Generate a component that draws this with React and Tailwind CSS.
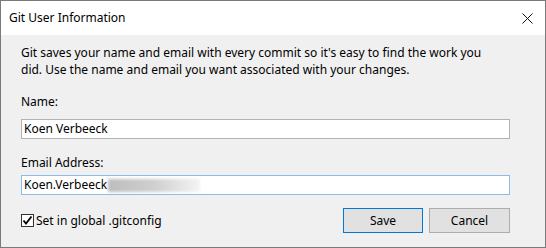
import React from "react";

export default function App() {
  return (
    <div className="w-[546px] h-[248px] flex flex-col border border-[#7a7a7a] bg-[#f0f0f0] text-[12px] text-black font-['Noto_Sans','Open_Sans',sans-serif] overflow-hidden">
      {/* title bar */}
      <div className="h-[34px] shrink-0 bg-white flex items-center justify-between pl-[8px] pr-[12px]">
        <span className="leading-[16px]">Git User Information</span>
        <svg width="11" height="11" viewBox="0 0 11 11" className="mt-[1px]">
          <path d="M0.5 0.5 L10.5 10.5 M10.5 0.5 L0.5 10.5" stroke="#111" strokeWidth="1" fill="none" />
        </svg>
      </div>

      {/* body */}
      <div className="flex-1 flex flex-col pl-[20px] pr-[35px] pt-[9px]">
        <p className="leading-[17px] whitespace-nowrap">
          Git saves your name and email with every commit so it's easy to find the work you
          <br />
          did. Use the name and email you want associated with your changes.
        </p>

        <label className="mt-[16px] leading-[16px]">Name:</label>
        <div className="mt-[9px] h-[20px] bg-white border border-[#b3b3b3] flex items-center px-[2px] leading-[16px]">
          Koen Verbeeck
        </div>

        <label className="mt-[16px] leading-[16px]">Email Address:</label>
        <div className="mt-[4px] h-[20px] bg-white border border-[#8fbbea] flex items-center px-[2px] leading-[16px]">
          <span>Koen.Verbeeck</span>
          <span className="ml-[1px] h-[13px] w-[92px] bg-gradient-to-r from-[#bdbdbd] via-[#cfcfcf] to-[#f4f4f4] blur-[1.5px]" />
        </div>

        <div className="mt-[13px] flex items-center justify-between">
          <label className="flex items-center gap-[2px]">
            <span className="w-[13px] h-[13px] bg-white border border-[#333] flex items-center justify-center">
              <svg width="11" height="11" viewBox="0 0 11 11">
                <path d="M1.5 5.5 L4 8.5 L9.5 1.5" stroke="#000" strokeWidth="1.8" fill="none" />
              </svg>
            </span>
            <span className="leading-[16px]">Set in global .gitconfig</span>
          </label>
          <div className="flex gap-[6px]">
            <button className="w-[80px] h-[25px] bg-[#e1e1e1] border border-[#0078d7] leading-[16px]">
              Save
            </button>
            <button className="w-[81px] h-[25px] bg-[#e1e1e1] border border-[#adadad] leading-[16px]">
              Cancel
            </button>
          </div>
        </div>
      </div>
    </div>
  );
}
